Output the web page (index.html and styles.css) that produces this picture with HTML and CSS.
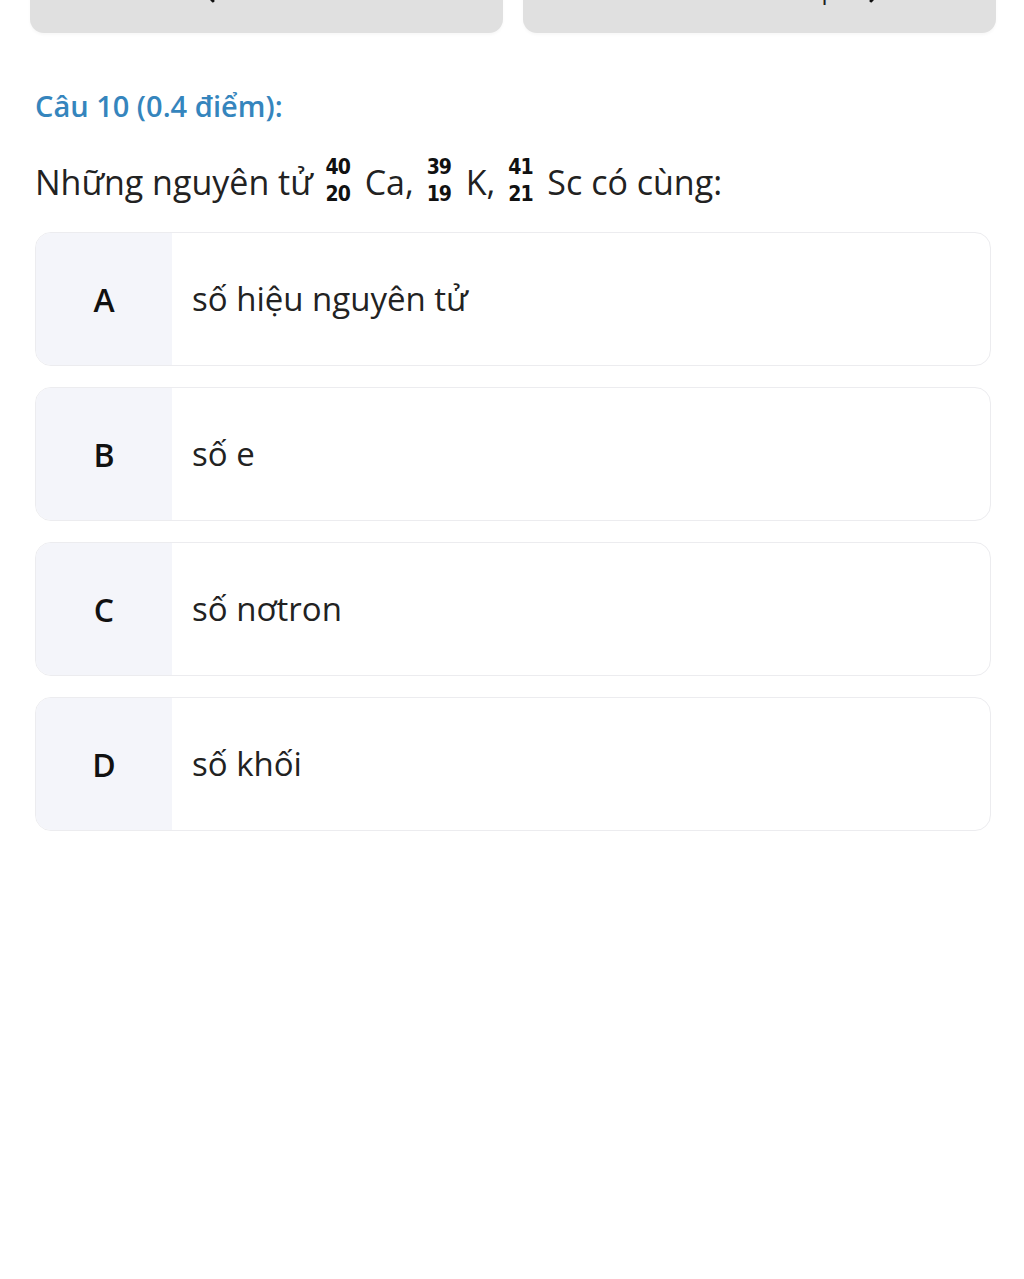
FILE: index.html
```html
<!DOCTYPE html>
<html lang="vi">
<head>
<meta charset="utf-8">
<link rel="stylesheet" href="styles.css">
</head>
<body>
<div class="page">
  <div class="nav">
    <div class="nav-btn nav-prev">
      <svg class="chev" width="22" height="26" viewBox="0 0 22 26"><path d="M15 2 L5 13 L15 24" fill="none" stroke="#111" stroke-width="3" stroke-linecap="round" stroke-linejoin="round"/></svg>
      <span class="nav-text">Câu trước</span>
    </div>
    <div class="nav-btn nav-next">
      <span class="nav-text">Câu tiếp</span>
      <svg class="chev" width="22" height="26" viewBox="0 0 22 26"><path d="M7 2 L17 13 L7 24" fill="none" stroke="#111" stroke-width="3" stroke-linecap="round" stroke-linejoin="round"/></svg>
    </div>
  </div>

  <h2 class="q-title">Câu 10 (0.4 điểm):</h2>

  <p class="q-text">Những nguyên tử <span class="iso"><span>40</span><span>20</span></span> Ca, <span class="iso"><span>39</span><span>19</span></span> K, <span class="iso"><span>41</span><span>21</span></span> Sc có cùng:</p>

  <div class="options">
    <div class="option"><div class="opt-letter">A</div><div class="opt-text">số hiệu nguyên tử</div></div>
    <div class="option"><div class="opt-letter">B</div><div class="opt-text">số e</div></div>
    <div class="option"><div class="opt-letter">C</div><div class="opt-text">số nơtron</div></div>
    <div class="option"><div class="opt-letter">D</div><div class="opt-text">số khối</div></div>
  </div>
</div>
</body>
</html>
```

FILE: styles.css
```css
html, body {
  margin: 0;
  padding: 0;
  background: #ffffff;
}

body {
  font-family: "Open Sans", "Noto Sans", sans-serif;
  color: #222;
  overflow: hidden;
}

.page {
  padding: 0 28px 0 30px;
}

.nav {
  display: grid;
  grid-template-columns: 1fr 1fr;
  gap: 20px;
  margin-top: -47px;
}

.nav-btn {
  height: 80px;
  background: #e0e0e0;
  border-radius: 14px;
  display: flex;
  align-items: center;
  gap: 12px;
  padding-bottom: 6px;
  box-sizing: border-box;
  box-shadow: 0 2px 3px rgba(0, 0, 0, 0.03);
}

.nav-prev {
  justify-content: flex-start;
  padding-left: 168px;
}

.nav-next {
  justify-content: flex-start;
  padding-left: 221px;
  gap: 28px;
}

.nav-text {
  font-size: 24px;
  color: #222;
  line-height: 24px;
}

.q-title {
  margin: 53px 5px 0;
  font-size: 29px;
  font-weight: 600;
  color: #3585bd;
  line-height: 40px;
}

.q-text {
  margin: 32px 5px 0;
  font-size: 34px;
  line-height: 48px;
  color: #222;
}

.iso {
  display: inline-flex;
  flex-direction: column;
  align-items: center;
  vertical-align: middle;
  font-family: "DejaVu Sans Condensed", "DejaVu Sans", sans-serif;
  font-weight: bold;
  font-size: 21px;
  line-height: 27px;
  letter-spacing: -1px;
  color: #111;
  margin: -14px 6px -14px 4px;
  position: relative;
  top: -5px;
}

.options {
  margin: 26px 5px 0;
  display: flex;
  flex-direction: column;
  gap: 21px;
}

.option {
  display: flex;
  height: 134px;
  border: 1px solid #ececef;
  border-radius: 16px;
  overflow: hidden;
  box-sizing: border-box;
  background: #fff;
}

.opt-letter {
  width: 136px;
  flex: none;
  background: #f4f5fa;
  display: flex;
  align-items: center;
  justify-content: center;
  font-size: 32px;
  font-weight: 600;
  color: #111;
}

.opt-text {
  display: flex;
  align-items: center;
  padding-left: 20px;
  font-size: 33px;
  color: #222;
  padding-bottom: 2px;
}
```
